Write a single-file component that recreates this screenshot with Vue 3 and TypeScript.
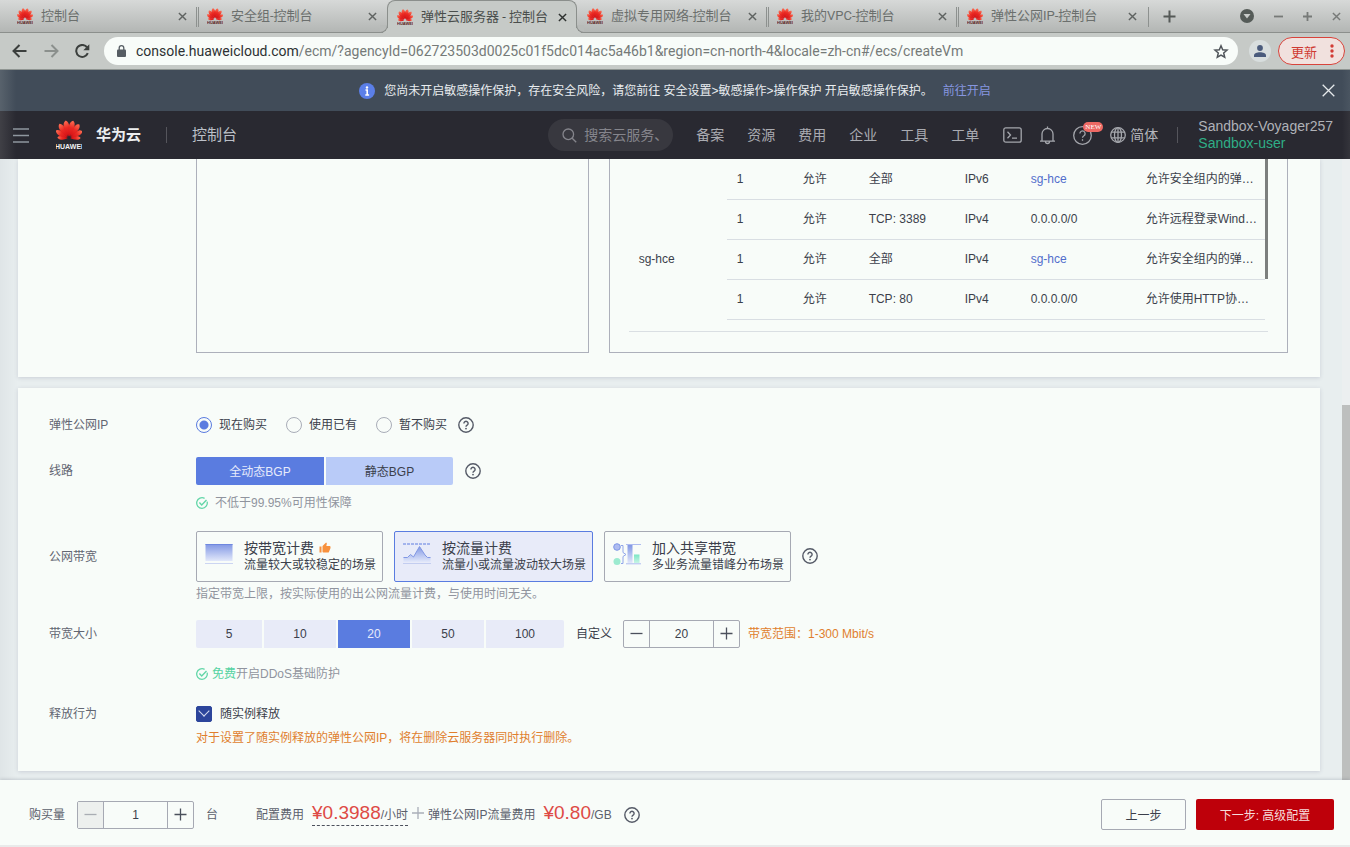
<script setup lang="ts">
import { ref } from 'vue'

interface Tab { title: string; active?: boolean; sep?: 'double' | 'single' }
interface Rule { priority: string; action: string; port: string; type: string; source: string; link: boolean; desc: string }
interface Plan { id: string; title: string; desc: string; width: string; hot?: boolean }

const tabs: Tab[] = [
  { title: '控制台', sep: 'double' },
  { title: '安全组-控制台' },
  { title: '弹性云服务器 - 控制台', active: true },
  { title: '虚拟专用网络-控制台', sep: 'double' },
  { title: '我的VPC-控制台', sep: 'double' },
  { title: '弹性公网IP-控制台', sep: 'single' },
]

const petals = [
  { a: -86, s: 0.64 }, { a: 86, s: 0.64 },
  { a: -60, s: 0.84 }, { a: 60, s: 0.84 },
  { a: -35, s: 0.96 }, { a: 35, s: 0.96 },
  { a: -12, s: 1 }, { a: 12, s: 1 },
]

const navItems = ['备案', '资源', '费用', '企业', '工具', '工单']

const rules: Rule[] = [
  { priority: '1', action: '允许', port: '全部', type: 'IPv6', source: 'sg-hce', link: true, desc: '允许安全组内的弹…' },
  { priority: '1', action: '允许', port: 'TCP: 3389', type: 'IPv4', source: '0.0.0.0/0', link: false, desc: '允许远程登录Wind…' },
  { priority: '1', action: '允许', port: '全部', type: 'IPv4', source: 'sg-hce', link: true, desc: '允许安全组内的弹…' },
  { priority: '1', action: '允许', port: 'TCP: 80', type: 'IPv4', source: '0.0.0.0/0', link: false, desc: '允许使用HTTP协…' },
]

const eipOptions = ['现在购买', '使用已有', '暂不购买']
const eip = ref('现在购买')
const lines = ['全动态BGP', '静态BGP']
const line = ref('全动态BGP')

const plans: Plan[] = [
  { id: 'band', title: '按带宽计费', desc: '流量较大或较稳定的场景', width: 'w-a', hot: true },
  { id: 'flow', title: '按流量计费', desc: '流量小或流量波动较大场景', width: 'w-b' },
  { id: 'share', title: '加入共享带宽', desc: '多业务流量错峰分布场景', width: 'w-a' },
]
const plan = ref('flow')

const sizes = [5, 10, 20, 50, 100]
const bandwidth = ref(20)
const release = ref(true)
const count = ref(1)
</script>

<template>
  <div class="window">
    <svg class="defs" width="0" height="0" aria-hidden="true">
      <defs>
        <radialGradient id="petalFill" gradientUnits="userSpaceOnUse" cx="0" cy="-66" r="60">
          <stop offset="0" stop-color="#fb6a50" />
          <stop offset="0.4" stop-color="#ea2a24" />
          <stop offset="1" stop-color="#d00c12" />
        </radialGradient>
        <symbol id="flower" viewBox="-50 -72 100 82">
          <path
            v-for="p in petals" :key="p.a" fill="url(#petalFill)"
            :transform="`rotate(${p.a}) scale(${p.s})`"
            d="M0 -8C-9 -24 -13 -40 -10 -55C-8 -64 -3 -69 2 -71C9 -66 12 -58 11 -47C10 -33 5 -19 0 -8Z"
          />
        </symbol>
        <symbol id="help" viewBox="0 0 16 16">
          <circle cx="8" cy="8" r="7.2" fill="none" stroke="currentColor" stroke-width="1.4" />
          <path d="M5.9 6.4a2.1 2.1 0 1 1 3.2 1.8c-.8.5-1.1.8-1.1 1.6" fill="none" stroke="currentColor" stroke-width="1.4" />
          <circle cx="8" cy="11.6" r=".9" fill="currentColor" />
        </symbol>
        <symbol id="tick" viewBox="0 0 12 12">
          <path d="M11.1 4.6A5.3 5.3 0 1 1 8.6 1.4" fill="none" stroke="#63d6a8" stroke-width="1.3" />
          <path d="M3.4 5.6l2.3 2.3 4.8-4.8" fill="none" stroke="#63d6a8" stroke-width="1.4" />
        </symbol>
        <symbol id="cross" viewBox="0 0 10 10">
          <path d="M1 1l8 8M9 1l-8 8" fill="none" stroke="currentColor" stroke-width="1.6" />
        </symbol>
        <linearGradient id="blueFade" x1="0" y1="0" x2="0" y2="1">
          <stop offset="0" stop-color="#8197e4" />
          <stop offset="1" stop-color="#e2e8fa" />
        </linearGradient>
        <linearGradient id="greenFade" x1="0" y1="0" x2="0" y2="1">
          <stop offset="0" stop-color="#7be6c4" />
          <stop offset="1" stop-color="#c8f5e6" />
        </linearGradient>
      </defs>
    </svg>

    <div class="tabs">
      <div v-for="t in tabs" :key="t.title" class="tab" :class="[{ active: t.active }, t.sep]">
        <svg class="favicon" viewBox="0 0 16 17">
          <use href="#flower" x="0" y="0" width="16" height="13" />
          <text x="8" y="16" text-anchor="middle" class="mini">HUAWEI</text>
        </svg>
        <span class="tab-title">{{ t.title }}</span>
        <button class="tab-close" aria-label="关闭标签页"><svg width="9" height="9"><use href="#cross" /></svg></button>
      </div>
      <button class="plain new-tab" aria-label="新标签页">
        <svg width="13" height="13" viewBox="0 0 13 13"><path d="M6.500 .5v12M.5 6.500h12" stroke="#555957" stroke-width="2" /></svg>
      </button>
      <div class="win-controls">
        <button class="plain" aria-label="搜索标签页">
          <svg width="14" height="14" viewBox="0 0 14 14"><circle cx="7" cy="7" r="7" fill="#555b58" /><path d="M3.500 5h7L7 9.600z" fill="#c9ccca" /></svg>
        </button>
        <button class="plain" aria-label="最小化"><svg width="9" height="9" viewBox="0 0 9 9"><path d="M0 4.500h9" stroke="#777a78" stroke-width="1.800" /></svg></button>
        <button class="plain" aria-label="最大化"><svg width="9" height="9" viewBox="0 0 9 9"><path d="M0 4.500h9M4.500 0v9" stroke="#777a78" stroke-width="1.800" /></svg></button>
        <button class="plain" aria-label="关闭"><svg width="9" height="9"><use href="#cross" /></svg></button>
      </div>
    </div>

    <div class="toolbar">
      <button class="plain" aria-label="后退">
        <svg width="15" height="14" viewBox="0 0 15 14"><path d="M14.500 7H1.800M7.500 1L1.500 7l6 6" fill="none" stroke="#3b3f3d" stroke-width="2" /></svg>
      </button>
      <button class="plain" aria-label="前进">
        <svg width="15" height="14" viewBox="0 0 15 14"><path d="M.5 7h12.700M7.500 1l6 6-6 6" fill="none" stroke="#8b908d" stroke-width="2" /></svg>
      </button>
      <button class="plain" aria-label="重新加载">
        <svg width="15" height="14" viewBox="0 0 15 14"><path d="M12.800 9.200a6 6 0 1 1-.7-5.800" fill="none" stroke="#3b3f3d" stroke-width="2" /><path d="M14.300 .3v6H8.300z" fill="#3b3f3d" /></svg>
      </button>
      <div class="address">
        <svg width="9" height="12" viewBox="0 0 9 12"><rect y="4.500" width="9" height="7.500" rx="1" fill="#565d63" /><path d="M2.200 5V3a2.300 2.300 0 0 1 4.600 0v2" fill="none" stroke="#565d63" stroke-width="1.300" /></svg>
        <div class="url"><b>console.huaweicloud.com</b>/ecm/?agencyId=062723503d0025c01f5dc014ac5a46b1&amp;region=cn-north-4&amp;locale=zh-cn#/ecs/createVm</div>
        <button class="plain" aria-label="收藏">
          <svg width="16" height="15" viewBox="0 0 16 15"><path d="M8 1.800l1.700 4 4.300.4-3.300 2.800 1 4.200L8 11l-3.700 2.200 1-4.200L2 6.200l4.300-.4z" fill="none" stroke="#50555a" stroke-width="1.500" /></svg>
        </button>
      </div>
      <button class="plain avatar" aria-label="个人资料">
        <svg width="12" height="12" viewBox="0 0 12 12"><circle cx="6" cy="3" r="2.900" fill="#4a5b7c" /><path d="M0 12v-1.500C0 8.300 3 7.200 6 7.200s6 1.100 6 3.300V12z" fill="#4a5b7c" /></svg>
      </button>
      <button class="update">更新<svg width="4" height="14" viewBox="0 0 4 14"><circle cx="2" cy="2" r="1.700" fill="#d23c35" /><circle cx="2" cy="7" r="1.700" fill="#d23c35" /><circle cx="2" cy="12" r="1.700" fill="#d23c35" /></svg></button>
    </div>

    <div class="banner">
      <div class="banner-text">
        <svg width="16" height="16" viewBox="0 0 16 16"><circle cx="8" cy="8" r="8" fill="#5b7fe8" /><circle cx="8" cy="4.500" r="1.200" fill="#fff" /><path d="M6.500 7H8.200v5M6.300 12h3.800" fill="none" stroke="#fff" stroke-width="1.600" /></svg>
        <span>您尚未开启敏感操作保护，存在安全风险，请您前往 安全设置&gt;敏感操作&gt;操作保护 开启敏感操作保护。</span>
        <a href="#">前往开启</a>
      </div>
      <button class="plain" aria-label="关闭提示"><svg width="13" height="13" viewBox="0 0 13 13"><path d="M.7 .7l11.600 11.600M12.300 .7L.7 12.300" stroke="#e6eaec" stroke-width="1.300" /></svg></button>
    </div>

    <header class="nav">
      <button class="plain" aria-label="菜单"><svg width="16" height="15" viewBox="0 0 16 15"><path d="M0 1h16M0 7.500h16M0 14h16" stroke="#8f979f" stroke-width="1.500" /></svg></button>
      <svg class="logo" width="26" height="30" viewBox="0 0 26 30">
        <use href="#flower" x="0" y="0" width="26" height="21" />
        <text x="13" y="29" text-anchor="middle" class="logo-text">HUAWEI</text>
      </svg>
      <strong>华为云</strong>
      <i class="bar" />
      <span class="console">控制台</span>
      <label class="search">
        <svg width="15" height="15" viewBox="0 0 15 15"><circle cx="6.300" cy="6.300" r="5.300" fill="none" stroke="#85858c" stroke-width="1.300" /><path d="M10.200 10.200l4 4" stroke="#85858c" stroke-width="1.300" /></svg>
        <input type="text" placeholder="搜索云服务、" aria-label="搜索">
      </label>
      <nav>
        <a v-for="n in navItems" :key="n" href="#">{{ n }}</a>
      </nav>
      <div class="icons">
        <svg width="19" height="16" viewBox="0 0 19 16"><rect x=".8" y=".8" width="17.400" height="14.400" rx="2" /><path d="M4.500 4.800L7.500 8l-3 3.200M9 11.200h5" /></svg>
        <svg class="bell" width="17" height="19" viewBox="0 0 17 19"><path d="M8.500 .5v1.500M3 15V8a5.500 5.500 0 0 1 11 0v7M1 15.200h15M6.500 15.500a2 2 0 0 0 4 0" /></svg>
        <span class="help-wrap">
          <svg width="19" height="19" viewBox="0 0 19 19"><circle cx="9.500" cy="9.500" r="8.800" /><path d="M6.900 7.500a2.600 2.600 0 1 1 4 2.200c-1 .6-1.400 1-1.400 2" /><path d="M9.500 13.200v1.600" /></svg>
          <em>NEW</em>
        </span>
        <span class="lang">
          <svg width="16" height="16" viewBox="0 0 16 16"><circle cx="8" cy="8" r="7.300" /><ellipse cx="8" cy="8" rx="3.500" ry="7.300" /><path d="M8 .7v14.600M1.300 5.200h13.400M1.300 10.800h13.400" /></svg>
          简体
        </span>
      </div>
      <i class="bar" />
      <div class="account"><span>Sandbox-Voyager257</span><span class="user">Sandbox-user</span></div>
    </header>

    <main>
      <div class="content">
        <section class="card groups">
          <div class="panel" />
          <div class="panel rules">
            <div class="viewport">
              <table>
                <colgroup><col class="c0"><col class="c1"><col class="c1"><col class="c2"><col class="c1"><col class="c3"><col></colgroup>
                <tbody>
                  <tr v-for="(r, i) in rules" :key="i">
                    <th v-if="i === 0" :rowspan="rules.length" scope="rowgroup">sg-hce</th>
                    <td>{{ r.priority }}</td>
                    <td>{{ r.action }}</td>
                    <td>{{ r.port }}</td>
                    <td>{{ r.type }}</td>
                    <td><a v-if="r.link" href="#">{{ r.source }}</a><template v-else>{{ r.source }}</template></td>
                    <td>{{ r.desc }}</td>
                  </tr>
                </tbody>
              </table>
              <div class="thumb" />
            </div>
          </div>
        </section>

        <form class="card form" @submit.prevent>
          <div class="row r1">
            <span class="label">弹性公网IP</span>
            <div class="line">
              <label v-for="o in eipOptions" :key="o" class="radio"><input v-model="eip" type="radio" name="eip" :value="o">{{ o }}</label>
              <svg class="q"><use href="#help" /></svg>
            </div>
          </div>

          <div class="row r2">
            <span class="label">线路</span>
            <div>
              <div class="line">
                <div class="toggle">
                  <button v-for="l in lines" :key="l" type="button" :class="{ on: l === line }" @click="line = l">{{ l }}</button>
                </div>
                <svg class="q"><use href="#help" /></svg>
              </div>
              <p class="note wide"><svg width="12" height="12"><use href="#tick" /></svg>不低于99.95%可用性保障</p>
            </div>
          </div>

          <div class="row r3">
            <span class="label">公网带宽</span>
            <div>
              <div class="line plans">
                <button v-for="p in plans" :key="p.id" type="button" class="plan" :class="[p.width, { on: p.id === plan }]" @click="plan = p.id">
                  <svg v-if="p.id === 'band'" width="28" height="22" viewBox="0 0 28 22"><rect x=".5" y="1" width="27" height="17" fill="url(#blueFade)" /><path d="M.5 1.500h27" stroke="#6f88df" /><path d="M0 20.500h28" stroke="#ccd5f2" /></svg>
                  <svg v-else-if="p.id === 'flow'" width="28" height="22" viewBox="0 0 28 22"><path d="M0 1h28" stroke="#5f7de0" stroke-dasharray="3 1" /><path d="M.5 14.500h4l3-3 3 2.500 6-10.500 5.500 8.500 2.500 2.500h3V19H.5z" fill="url(#blueFade)" /><path d="M.5 14.500h4l3-3 3 2.500 6-10.500 5.500 8.500 2.500 2.500h3" fill="none" stroke="#8197e4" /><path d="M0 20.500h28" stroke="#c3cdf0" /></svg>
                  <svg v-else width="28" height="22" viewBox="0 0 28 22"><circle cx="4" cy="4" r="3.300" fill="#aebcf0" stroke="#7f97e6" /><circle cx="4" cy="18.500" r="3.500" fill="#9cebd0" /><path d="M8 2.500h2v7l3 2-3 2v7H8" fill="none" stroke="#8fa5ea" /><rect x="14.500" y="2" width="5" height="18" fill="url(#blueFade)" /><rect x="21" y="11.500" width="5.500" height="8.500" fill="url(#greenFade)" /><path d="M13 1.500h15M13 20.800h15" stroke="#aebcf0" /></svg>
                  <span class="plan-text">
                    <span class="plan-title">{{ p.title }}<svg v-if="p.hot" width="12" height="12" viewBox="0 0 24 24"><path fill="#f7913d" d="M1 21h4V9H1v12zm22-11c0-1.100-.9-2-2-2h-6.310l.95-4.570.03-.32c0-.41-.17-.79-.44-1.060L14.170 1 7.590 7.590C7.220 7.950 7 8.450 7 9v10c0 1.100.9 2 2 2h9c.83 0 1.540-.5 1.840-1.220l3.020-7.050c.09-.23.14-.47.14-.73v-2z" /></svg></span>
                    <span class="plan-desc">{{ p.desc }}</span>
                  </span>
                </button>
                <svg class="q"><use href="#help" /></svg>
              </div>
              <p class="note">指定带宽上限，按实际使用的出公网流量计费，与使用时间无关。</p>
            </div>
          </div>

          <div class="row r4">
            <span class="label">带宽大小</span>
            <div>
              <div class="line">
                <div class="sizes">
                  <button v-for="s in sizes" :key="s" type="button" :class="['s' + s, { on: s === bandwidth }]" @click="bandwidth = s">{{ s }}</button>
                </div>
                <label class="custom" for="bw">自定义</label>
                <div class="stepper">
                  <button type="button" aria-label="减少" @click="bandwidth--"><svg width="13" height="13" viewBox="0 0 13 13"><path d="M.5 6.500h12" /></svg></button>
                  <input id="bw" v-model.number="bandwidth" type="text">
                  <button type="button" aria-label="增加" @click="bandwidth++"><svg width="13" height="13" viewBox="0 0 13 13"><path d="M.5 6.500h12M6.500 .5v12" /></svg></button>
                </div>
                <span class="warn range">带宽范围：1-300 Mbit/s</span>
              </div>
              <p class="note"><svg width="12" height="12"><use href="#tick" /></svg><span><b>免费</b>开启DDoS基础防护</span></p>
            </div>
          </div>

          <div class="row r5">
            <span class="label">释放行为</span>
            <div>
              <label class="check"><input v-model="release" type="checkbox">随实例释放</label>
              <p class="warn">对于设置了随实例释放的弹性公网IP，将在删除云服务器同时执行删除。</p>
            </div>
          </div>
        </form>
      </div>
      <div class="scrollbar"><div /></div>
    </main>

    <footer>
      <label for="qty">购买量</label>
      <div class="stepper">
        <button type="button" class="off" disabled aria-label="减少"><svg width="13" height="13" viewBox="0 0 13 13"><path d="M.5 6.500h12" /></svg></button>
        <input id="qty" v-model.number="count" type="text">
        <button type="button" aria-label="增加" @click="count++"><svg width="13" height="13" viewBox="0 0 13 13"><path d="M.5 6.500h12M6.500 .5v12" /></svg></button>
      </div>
      <span class="unit">台</span>
      <div class="prices">
        <span>配置费用</span>
        <span class="price dashed"><b>¥0.3988</b>/小时</span>
        <svg class="plus" width="12" height="12" viewBox="0 0 12 12"><path d="M0 6h12M6 0v12" stroke="#a9aeb8" stroke-width="1.300" /></svg>
        <span>弹性公网IP流量费用</span>
        <span class="price"><b>¥0.80</b>/GB</span>
      </div>
      <svg class="q"><use href="#help" /></svg>
      <button class="prev" type="button">上一步</button>
      <button class="next" type="button">下一步: 高级配置</button>
    </footer>
  </div>
</template>

<style>
html, body { margin: 0; overflow: hidden; }
</style>

<style scoped>
.window, .window button, .window input { font-family: "Liberation Sans", "Noto Sans CJK SC", sans-serif; font-size: 12px; }
.window { display: flex; flex-direction: column; height: 100vh; color: #3b3f4b; background: #e7edee; line-height: 20px; }
.window *, .window *::before, .window *::after { box-sizing: border-box; }
.defs { position: absolute; }
button { margin: 0; padding: 0; cursor: pointer; }
a { text-decoration: none; color: #526ecc; }
p { margin: 0; }
svg { flex: none; display: block; }
.plain { border: 0; background: none; display: flex; align-items: center; justify-content: center; flex: none; }

/* browser tabs */
.tabs { display: flex; height: 33px; padding: 0 9px 0 7px; background: linear-gradient(#d7d9d8, #b3b6b4); border-bottom: 1px solid #8b8f8c; flex: none; }
.tab { position: relative; display: flex; align-items: center; flex: 0 1 190px; min-width: 0; padding: 0 9px 0 10px; color: #6b6f6d; }
.tab.double::after, .tab.single::after { content: ""; position: absolute; right: -2px; top: 7px; height: 20px; border-right: 3px double #8d918f; }
.tab.single::after { border-right: 1px solid #8d918f; }
.favicon { width: 16px; height: 17px; }
.mini { font: bold 4px "Liberation Sans", sans-serif; fill: #5a2020; }
.tab-title { flex: 1; margin-left: 8px; font-family: Roboto, "Noto Sans CJK SC", sans-serif; font-size: 13px; white-space: nowrap; overflow: hidden; }
.tab-close { border: 0; background: none; color: #5f6361; width: 12px; height: 12px; display: flex; align-items: center; justify-content: center; }
.tab.active { height: 33px; background: #c6cac7; border: 1px solid #8b8f8c; border-bottom: 0; border-radius: 8px 8px 0 0; color: #4a4e4c; padding: 0 8px 0 9px; }
.tab.active .tab-close { color: #2e3230; }
.tab.active::before, .tab.active::after { content: ""; position: absolute; bottom: 0; width: 8px; height: 8px; border-bottom: 1px solid #8b8f8c; background: #b8bbb9; }
.tab.active::before { left: -8px; border-right: 1px solid #8b8f8c; border-bottom-right-radius: 8px; box-shadow: 3px 3px 0 #c6cac7; }
.tab.active::after { right: -8px; border-left: 1px solid #8b8f8c; border-bottom-left-radius: 8px; box-shadow: -3px 3px 0 #c6cac7; }
.new-tab { margin-left: 16px; }
.win-controls { margin-left: auto; display: flex; gap: 20px; }
.win-controls .plain { color: #777a78; }

/* toolbar */
.toolbar { display: flex; align-items: center; height: 37px; padding: 0 5px 0 12px; background: #c6cac7; border-bottom: 1px solid #8f9592; flex: none; }
.toolbar > .plain { margin-right: 17px; }
.toolbar > .plain + .plain { margin-right: 16px; }
.toolbar > .plain:nth-child(3) { margin-right: 14px; }
.address { flex: 1; min-width: 0; display: flex; align-items: center; height: 28px; border-radius: 14px; background: #f8fcf9; padding: 0 9px 0 13px; }
.url { flex: 1; margin-left: 10px; font-family: Roboto, sans-serif; font-size: 14px; color: #757a78; white-space: nowrap; overflow: hidden; }
.url b { font-weight: 400; color: #2d3133; }
.toolbar > .plain.avatar { width: 22px; height: 22px; border-radius: 50%; background: #d8dede; margin: 0 7px 0 11px; }
.window .update { display: flex; align-items: center; justify-content: space-between; width: 67px; height: 28px; padding: 0 10px 0 12px; border: 1px solid #d8433b; border-radius: 14px; background: #f1e1de; color: #cf3a32; font-size: 13px; }

/* notice */
.banner { display: flex; align-items: center; height: 41px; padding-right: 15px; background: linear-gradient(90deg, #58626c, #414c59 16px, #414c59 calc(100% - 8px), #4a5561); color: #e9edf0; flex: none; }
.banner-text { flex: 1; display: flex; align-items: center; justify-content: center; margin-left: 28px; }
.banner-text svg { margin-right: 9px; }
.banner-text a { color: #8696e0; margin-left: 10px; }

/* console header */
.nav { display: flex; align-items: center; height: 48px; padding: 0 17px 0 13px; background: linear-gradient(90deg, #404046, #292931 16px, #292931 calc(100% - 8px), #34343b); color: #b0b2b8; font-size: 14px; flex: none; }
.logo { margin: 0 14px 0 27px; }
.logo-text { font: bold 7px "Liberation Sans", sans-serif; fill: #f2f2f2; }
.nav strong { font-size: 15px; color: #eceef0; }
.console { font-size: 15px; color: #bcc0c8; }
.bar { width: 1px; height: 16px; background: #55555c; margin: 0 25px; }
.search { display: flex; align-items: center; margin-left: auto; width: 125px; height: 32px; border-radius: 16px; background: #38383f; padding: 0 12px 0 14px; }
.window .search input { flex: 1; min-width: 0; margin-left: 7px; padding: 0; border: 0; outline: 0; background: none; font-size: 14px; color: #b0b2b8; }
.search input::placeholder { color: #85858c; opacity: 1; }
nav { display: flex; gap: 23px; margin: 0 24px 0 23px; }
nav a { color: #a9abb1; }
.icons { display: flex; align-items: center; }
.icons svg { fill: none; stroke: #a4a6ac; stroke-width: 1.3; }
.icons .bell { margin: 0 17px; }
.help-wrap { position: relative; margin-right: 18px; }
.help-wrap em { position: absolute; left: 10px; top: -4px; width: 20px; height: 10px; border-radius: 5px; background: #ee6964; color: #fff; font: 7px/10px "Liberation Serif", serif; text-align: center; }
.lang { display: flex; align-items: center; gap: 4px; color: #b4b6bb; }
.nav > .bar:nth-last-child(2) { margin: 0 20px 0 19px; }
.account { display: flex; flex-direction: column; line-height: 17px; white-space: nowrap; }
.account .user { color: #2fae86; }

/* page body */
main { flex: 1; min-height: 0; display: flex; overflow: hidden; background: linear-gradient(90deg, #dfe5e7, #e8eeef 18px); }
.content { flex: 1; min-width: 0; padding: 0 22px 0 18px; }
.card { background: #f8fcf9; box-shadow: 0 1px 4px rgba(70, 70, 110, .18); }
.scrollbar { width: 8px; display: flex; padding-top: 246px; background: #eceff0; }
.scrollbar div { flex: 1; background: #bdbfbe; }
.groups { display: grid; grid-template-columns: 393fr 680fr; gap: 20px; padding: 0 32px 24px 178px; margin-bottom: 11px; }
.panel { border: 1px solid #adb0bb; border-top: 0; }
.rules { padding: 0 19px 20px; }
.viewport { display: flex; align-items: flex-start; padding-bottom: 11px; border-bottom: 1px solid #dadfe3; }
.thumb { width: 3px; height: 120px; background: #7c7f7e; flex: none; }
table { flex: 1; width: 0; table-layout: fixed; border-collapse: collapse; }
.c0 { width: 98px; } .c1 { width: 66px; } .c2 { width: 96px; } .c3 { width: 115px; }
th { font-weight: 400; text-align: left; padding: 40px 10px 0; }
td { height: 40px; padding: 0 0 0 10px; border-bottom: 1px solid #d9dee3; white-space: nowrap; }

/* purchase form */
.form { padding: 27px 31px 23px; }
.row { display: grid; grid-template-columns: 147px 1fr; }
.label { color: #626672; line-height: 20px; }
.r1 { margin-bottom: 22px; }
.r2 { margin-bottom: 18px; } .r2 .label { line-height: 28px; }
.r3 { margin-bottom: 16px; } .r3 .label { line-height: 52px; }
.r4 { margin-bottom: 20px; } .r4 .label { line-height: 28px; }
.line { display: flex; align-items: center; }
.q { width: 16px; height: 16px; color: #555a67; margin-left: 12px; }
.radio { display: flex; align-items: center; margin-right: 19px; line-height: 20px; }
.radio + .q { margin-left: -8px; }
.radio input { appearance: none; width: 16px; height: 16px; margin: 0 7px 0 0; border: 1px solid #a9adb8; border-radius: 50%; }
.radio input:checked { border-color: #5a7be0; background: radial-gradient(circle, #5a7be0 4px, transparent 5px); }
.toggle, .sizes { display: flex; gap: 2px; }
.toggle button { width: 128px; height: 28px; border: 0; border-radius: 2px 0 0 2px; background: #b9cbf8; color: #3b3f4b; }
.toggle button + button { border-radius: 0 2px 2px 0; width: 127px; }
.toggle .on, .sizes .on { background: #5a7ce0; color: #e6ebfb; }
.note { display: flex; align-items: center; gap: 4px; color: #90949e; margin-top: 2px; }
.note b { font-weight: 400; color: #55d3a2; }
.note.wide { gap: 7px; margin-top: 8px; }
.r4 .note { margin-top: 16px; }
.plan { display: flex; align-items: center; height: 51px; margin-right: 11px; padding: 0 0 0 8px; border: 1px solid #a6a9b3; border-radius: 2px; background: none; color: #3b3f4b; text-align: left; white-space: nowrap; }
.w-a { width: 187px; } .w-b { width: 199px; }
.plan.on { background: #e8ebf9; border-color: #5a7ce0; }
.plan > svg { margin: 0 11px 4px 0; }
.plans .q { margin-left: 0; }
.plan-text { display: flex; flex-direction: column; line-height: 16px; }
.plan-title { display: flex; align-items: center; gap: 5px; font-size: 14px; line-height: 18px; }
.sizes button { width: 72px; height: 28px; border: 0; background: #e8ebf8; color: #3b3f4b; }
.sizes .s5 { width: 66px; border-radius: 2px 0 0 2px; }
.sizes .s100 { width: 78px; border-radius: 0 2px 2px 0; }
.sizes .on { background: #5a7ce0; color: #e6ebfb; }
.custom { margin: 0 11px 0 12px; }
.stepper { display: flex; width: 117px; height: 28px; border: 1px solid #a6a9b3; border-radius: 2px; }
.stepper button { width: 25px; flex: none; border: 0; background: none; display: flex; align-items: center; justify-content: center; }
.stepper button svg { stroke: #4b505c; stroke-width: 1.3; }
.stepper .off { background: #edf0ee; }
.stepper .off svg { stroke: #a9adb3; }
.stepper input { flex: 1; min-width: 0; padding: 0; border: solid #a6a9b3; border-width: 0 1px; background: none; text-align: center; color: #3b3f4b; outline: 0; }
.warn { color: #e07f2e; }
.range { margin-left: 8px; }
.check { display: flex; align-items: center; width: max-content; }
.check input { appearance: none; width: 16px; height: 16px; margin: 0 8px 0 0; border-radius: 2px; border: 1px solid #2c459b; display: grid; place-items: center; }
.check input:checked { background: #2c459b; }
.check input:checked::before { content: ""; width: 8px; height: 8px; margin-top: -5px; border: solid #d5dcf0; border-width: 0 1px 1px 0; transform: rotate(45deg); }
.r5 .warn { margin-top: 4px; }

/* order bar */
footer { display: flex; align-items: center; height: 67px; padding: 4px 16px 0 29px; background: #f8fcf9; border-bottom: 2px solid #e9eaea; box-shadow: 0 -1px 3px rgba(60, 70, 90, .2); position: relative; color: #5b606c; flex: none; }
footer .stepper { margin: 0 12px; }
.prices { display: flex; align-items: baseline; margin-left: 38px; }
.price { margin-left: 8px; line-height: 20px; }
.price b { font-weight: 400; font-size: 19px; color: #de4a45; }
.dashed { border-bottom: 1px dashed #4b505c; }
.plus { margin: 0 4px; }
.window .prev, .window .next { height: 31px; border-radius: 2px; }
.prev { margin-left: auto; width: 85px; border: 1px solid #a6a9b3; background: none; color: #3b3f4b; }
.next { margin-left: 10px; width: 138px; border: 0; background: #be000a; color: #f6dcdc; }
</style>
